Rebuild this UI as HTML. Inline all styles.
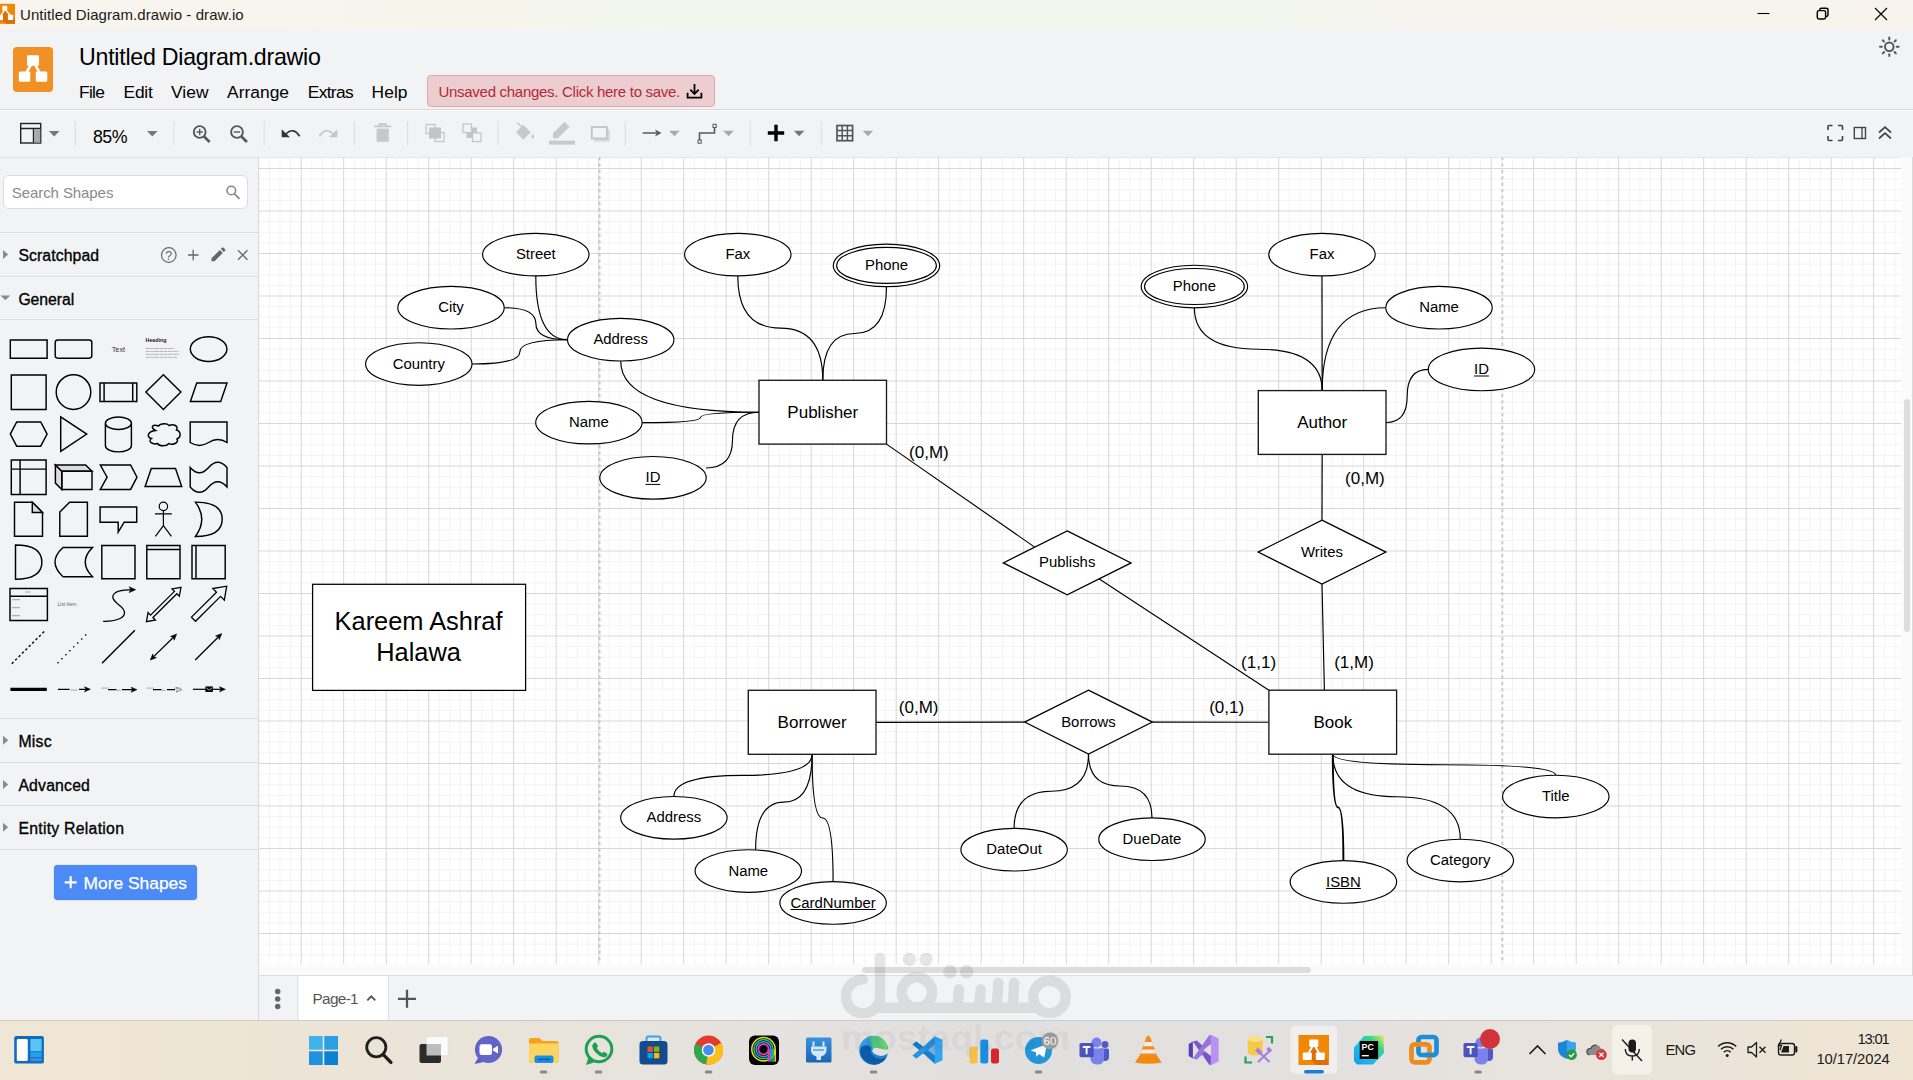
<!DOCTYPE html><html><head><meta charset="utf-8"><title>Untitled Diagram.drawio - draw.io</title>
<style>
html,body{margin:0;padding:0;}
body{width:1913px;height:1080px;overflow:hidden;position:relative;background:#f1f3f4;font-family:"Liberation Sans",sans-serif;}
div{box-sizing:border-box;}
.abs{position:absolute;}
svg{position:absolute;overflow:visible;}
svg text{font-family:"Liberation Sans",sans-serif;fill:#000;}
</style></head><body>
<div class="abs" style="left:0;top:0;width:1913px;height:29px;background:linear-gradient(90deg,#f8f5ee 0%,#f6f5ec 25%,#f1f7ed 38%,#f1f7ed 60%,#f5f4ee 75%,#f7f3ec 100%);"></div>
<svg style="left:0px;top:0px;overflow:hidden;" width="20" height="29" viewBox="0 0 20 29"><rect x="-5" y="3.8" width="20" height="20" fill="#f08705"/><path d="M5,9 L15,19 V23.8 H6 L1.500,19 Z" fill="#df6c0c"/><path d="M4.800,9 L1.300,15.500 M4.800,9 L10.300,15.500" stroke="#fff" stroke-width="1.500"/><rect x="2.300" y="5.700" width="5" height="4.900" rx="0.700" fill="#fff"/><rect x="-2" y="14.700" width="5" height="5.300" rx="0.700" fill="#fff"/><rect x="7.900" y="14.700" width="5.300" height="5.300" rx="0.700" fill="#fff"/></svg>
<svg style="left:1750px;top:0px;" width="163" height="29" viewBox="0 0 163 29"><path d="M7.5,13.5 H19.5" stroke="#000" stroke-width="1.1" fill="none"/><rect x="67.3" y="10.6" width="8.3" height="8.3" rx="1.6" stroke="#000" stroke-width="1.45" fill="none"/><path d="M69.8,10.5 V9.8 Q69.8,8.3 71.3,8.3 H76 Q78,8.3 78,10 V14.7 Q78,16.4 76.3,16.4 H75.8" stroke="#000" stroke-width="1.45" fill="none"/><path d="M125,8 L137,20 M137,8 L125,20" stroke="#000" stroke-width="1.15" fill="none"/></svg>
<div style="position:absolute;top:4.60px;height:20px;line-height:20px;font-size:15.00px;color:#1a1a1a;white-space:pre;letter-spacing:0.087px;left:20.00px;">Untitled Diagram.drawio - draw.io</div>
<div class="abs" style="left:0;top:29px;width:1913px;height:80px;background:#f1f3f4;"></div>
<div class="abs" style="left:0;top:109px;width:1913px;height:1px;background:#d5d7da;"></div>
<div class="abs" style="left:0;top:110px;width:1913px;height:1px;background:#fbfbfc;"></div>
<svg style="left:13px;top:47px;" width="40" height="45" viewBox="0 0 40 45"><rect x="0" y="0" width="40" height="45" rx="4" fill="#f09025"/><path d="M20,14 L11.5,29 M20,14 L28.5,29" stroke="#fff" stroke-width="2.6" fill="none"/><rect x="14" y="8.3" width="12" height="10.5" rx="1.3" fill="#fff"/><rect x="5.8" y="24.5" width="11.5" height="10.2" rx="1.3" fill="#fff"/><rect x="22.8" y="24.5" width="11.5" height="10.2" rx="1.3" fill="#fff"/></svg>
<div style="position:absolute;top:41.80px;height:30px;line-height:30px;font-size:23.20px;color:#000;white-space:pre;letter-spacing:-0.251px;left:79.00px;">Untitled Diagram.drawio</div>
<div style="position:absolute;top:80.60px;height:23px;line-height:23px;font-size:17.40px;color:#000;white-space:pre;letter-spacing:-0.710px;left:79.00px;">File</div>
<div style="position:absolute;top:80.60px;height:23px;line-height:23px;font-size:17.40px;color:#000;white-space:pre;letter-spacing:-0.221px;left:123.50px;">Edit</div>
<div style="position:absolute;top:80.60px;height:23px;line-height:23px;font-size:17.40px;color:#000;white-space:pre;letter-spacing:0.050px;left:171.00px;">View</div>
<div style="position:absolute;top:80.60px;height:23px;line-height:23px;font-size:17.40px;color:#000;white-space:pre;letter-spacing:0.028px;left:227.00px;">Arrange</div>
<div style="position:absolute;top:80.60px;height:23px;line-height:23px;font-size:17.40px;color:#000;white-space:pre;letter-spacing:-0.652px;left:307.70px;">Extras</div>
<div style="position:absolute;top:80.60px;height:23px;line-height:23px;font-size:17.40px;color:#000;white-space:pre;letter-spacing:0.053px;left:371.60px;">Help</div>
<div class="abs" style="left:427px;top:75px;width:288px;height:31.5px;background:#eccdd0;border:1px solid #e2a7ae;border-radius:4px;"></div>
<div style="position:absolute;top:81.90px;height:20px;line-height:20px;font-size:15.00px;color:#b3283a;white-space:pre;letter-spacing:-0.286px;left:438.50px;">Unsaved changes. Click here to save.</div>
<svg style="left:685.5px;top:83px;" width="17" height="17" viewBox="0 0 17 17"><path d="M8.5,1 V10.5 M4.3,6.7 L8.5,10.9 L12.7,6.7" stroke="#000" stroke-width="1.8" fill="none"/><path d="M1.6,9.8 V14.7 H15.4 V9.8" stroke="#000" stroke-width="1.8" fill="none"/></svg>
<div style="position:absolute;top:125.70px;height:23px;line-height:23px;font-size:17.80px;color:#000;white-space:pre;letter-spacing:-0.542px;left:93.00px;">85%</div>
<svg style="left:0px;top:0px;" width="1913" height="160" viewBox="0 0 1913 160"><path d="M75.3,121.5 V145.5" stroke="#dadcdf" stroke-width="1"/><path d="M173.9,121.5 V145.5" stroke="#dadcdf" stroke-width="1"/><path d="M264.2,121.5 V145.5" stroke="#dadcdf" stroke-width="1"/><path d="M354.3,121.5 V145.5" stroke="#dadcdf" stroke-width="1"/><path d="M407.6,121.5 V145.5" stroke="#dadcdf" stroke-width="1"/><path d="M498.0,121.5 V145.5" stroke="#dadcdf" stroke-width="1"/><path d="M625.3,121.5 V145.5" stroke="#dadcdf" stroke-width="1"/><path d="M750.2,121.5 V145.5" stroke="#dadcdf" stroke-width="1"/><path d="M821.3,121.5 V145.5" stroke="#dadcdf" stroke-width="1"/><rect x="20.7" y="123.5" width="20" height="19.5" fill="none" stroke="#222" stroke-width="1.4"/><path d="M20.7,128.5 H40.7 M33.5,128.5 V143" stroke="#222" stroke-width="1.4" fill="none"/><rect x="34" y="129" width="6.3" height="13.5" fill="#aaa"/><path d="M48.9,130.9 h10.6 l-5.3,5.6 z" fill="#777"/><path d="M147.0,130.9 h10.6 l-5.3,5.6 z" fill="#777"/><circle cx="199.7" cy="132" r="5.900" fill="none" stroke="#555" stroke-width="1.900"/><path d="M204.0,136.400 l5.600,5.600" stroke="#555" stroke-width="2.700" fill="none"/><path d="M196.5,132 h6.400" stroke="#555" stroke-width="1.400"/><path d="M199.7,128.800 v6.400" stroke="#555" stroke-width="1.400"/><circle cx="237.0" cy="132" r="5.900" fill="none" stroke="#555" stroke-width="1.900"/><path d="M241.3,136.400 l5.600,5.600" stroke="#555" stroke-width="2.700" fill="none"/><path d="M233.8,132 h6.400" stroke="#555" stroke-width="1.400"/><path d="M281.700,129.300 V137.300 H289.900 Z" fill="#333"/><path d="M285.800,134 Q293.500,126.500 299.600,136.300" stroke="#333" stroke-width="1.700" fill="none"/><path d="M337.300,129.300 V137.300 H329.100 Z" fill="#c6c6c6"/><path d="M333.200,134 Q325.500,126.500 319.400,136.300" stroke="#c6c6c6" stroke-width="1.700" fill="none"/><path d="M374,126.300 h17.200 M379.300,125.600 v-1.500 h6.600 v1.500" stroke="#c8c8c8" stroke-width="1.800" fill="none"/><path d="M376.600,128.600 h12.200 v13.200 h-12.200 z" fill="#c8c8c8"/><rect x="426" y="124.5" width="9" height="9" fill="none" stroke="#c4c4c4" stroke-width="1.2"/><rect x="435" y="132.5" width="9" height="9" fill="none" stroke="#c4c4c4" stroke-width="1.2"/><rect x="429" y="127.5" width="12" height="11" fill="#c4c4c4"/><rect x="466.5" y="127.5" width="10.5" height="10.5" fill="#c4c4c4"/><rect x="463" y="124" width="8.5" height="8.5" fill="#f1f3f4" stroke="#c4c4c4" stroke-width="1.2"/><rect x="472.5" y="133" width="8.5" height="8.5" fill="#f1f3f4" stroke="#c4c4c4" stroke-width="1.2"/><path d="M516,132.200 L523.200,124.700 L530.700,132.300 L523.400,139.700 Z" fill="#c9c9c9"/><path d="M517.300,122.500 l6,6" stroke="#c9c9c9" stroke-width="1.400"/><path d="M532.800,133.800 q2.600,3.300 0,5 q-2.600,-1.700 0,-5z" fill="#c9c9c9"/><path d="M549,142.600 h26" stroke="#c9c9c9" stroke-width="4"/><path d="M553,138.300 v-5 l11.500,-11.500 l5,5 l-11.500,11.500 z" fill="#c9c9c9"/><rect x="594.300" y="129.500" width="15.500" height="12" fill="#d8d8d8"/><rect x="591.800" y="127" width="15" height="11.500" fill="#f1f3f4" stroke="#c4c4c4" stroke-width="1.800"/><path d="M642.700,133 h14" stroke="#5a5a5a" stroke-width="1.500" fill="none"/><path d="M661.500,133 l-6.500,-3.400 l1.600,3.400 l-1.600,3.400 z" fill="#5a5a5a"/><path d="M669.1,130.7 h10.6 l-5.3,5.6 z" fill="#aaa"/><path d="M699.500,140 V133 H714.500 V126.500" stroke="#5a5a5a" stroke-width="1.600" fill="none"/><rect x="698" y="140" width="3.200" height="3.200" fill="#f1f3f4" stroke="#5a5a5a" stroke-width="1"/><rect x="713" y="124.300" width="3.200" height="3.200" fill="#f1f3f4" stroke="#5a5a5a" stroke-width="1"/><path d="M723.2,130.7 h10.6 l-5.3,5.6 z" fill="#aaa"/><path d="M767.8,133 h16.4 M776,124.8 v16.4" stroke="#000" stroke-width="3.4" fill="none"/><path d="M793.8,130.7 h10.6 l-5.3,5.6 z" fill="#777"/><rect x="837" y="125.5" width="15.6" height="15.2" fill="none" stroke="#555" stroke-width="1.7"/><path d="M842.2,125.5 v15.2 M847.4,125.5 v15.2 M837,130.6 h15.6 M837,135.7 h15.6" stroke="#555" stroke-width="1.5" fill="none"/><path d="M862.6,130.7 h10.6 l-5.3,5.6 z" fill="#aaa"/><path d="M1828,130 v-3.5 q0,-1 1,-1 h3.5 M1838,125.5 h3.5 q1,0 1,1 v3.5 M1842.5,136 v3.5 q0,1 -1,1 h-3.5 M1832.500,140.5 h-3.5 q-1,0 -1,-1 v-3.500" stroke="#444" stroke-width="1.6" fill="none"/><rect x="1854.300" y="127.500" width="11.2" height="11" fill="none" stroke="#444" stroke-width="1.4"/><path d="M1862,127.500 v11" stroke="#444" stroke-width="1.300"/><path d="M1879,132.500 l6,-5.300 l6,5.300 M1879,138.500 l6,-5.300 l6,5.300" stroke="#444" stroke-width="1.700" fill="none"/><circle cx="1889.3" cy="46.800" r="4.300" fill="none" stroke="#555" stroke-width="1.950"/><path d="M1896.70,46.80 L1898.60,46.80" stroke="#555" stroke-width="1.950" stroke-linecap="round"/><path d="M1894.53,52.03 L1895.88,53.38" stroke="#555" stroke-width="1.950" stroke-linecap="round"/><path d="M1889.30,54.20 L1889.30,56.10" stroke="#555" stroke-width="1.950" stroke-linecap="round"/><path d="M1884.07,52.03 L1882.72,53.38" stroke="#555" stroke-width="1.950" stroke-linecap="round"/><path d="M1881.90,46.80 L1880.00,46.80" stroke="#555" stroke-width="1.950" stroke-linecap="round"/><path d="M1884.07,41.57 L1882.72,40.22" stroke="#555" stroke-width="1.950" stroke-linecap="round"/><path d="M1889.30,39.40 L1889.30,37.50" stroke="#555" stroke-width="1.950" stroke-linecap="round"/><path d="M1894.53,41.57 L1895.88,40.22" stroke="#555" stroke-width="1.950" stroke-linecap="round"/></svg>
<div class="abs" style="left:0;top:157px;width:258px;height:863px;background:#f1f3f4;"></div>
<div class="abs" style="left:258px;top:157px;width:1px;height:863px;background:#d9dbde;"></div>
<div class="abs" style="left:2.8px;top:174.8px;width:245px;height:33.8px;background:#fff;border:1px solid #dadce0;border-radius:6px;"></div>
<div style="position:absolute;top:182.50px;height:20px;line-height:20px;font-size:15.00px;color:#8a8a8a;white-space:pre;letter-spacing:-0.082px;left:11.80px;">Search Shapes</div>
<div class="abs" style="left:0;top:232.0px;width:258px;height:1px;background:#dcdee1;"></div>
<div class="abs" style="left:0;top:275.8px;width:258px;height:1px;background:#dcdee1;"></div>
<div class="abs" style="left:0;top:318.7px;width:258px;height:1px;background:#dcdee1;"></div>
<div class="abs" style="left:0;top:717.7px;width:258px;height:1px;background:#dcdee1;"></div>
<div class="abs" style="left:0;top:762.0px;width:258px;height:1px;background:#dcdee1;"></div>
<div class="abs" style="left:0;top:805.1px;width:258px;height:1px;background:#dcdee1;"></div>
<div class="abs" style="left:0;top:848.7px;width:258px;height:1px;background:#dcdee1;"></div>
<div style="position:absolute;top:244.70px;height:21px;line-height:21px;font-size:15.80px;color:#000;white-space:pre;letter-spacing:0.087px;left:18.40px;-webkit-text-stroke:0.32px #000;">Scratchpad</div>
<div style="position:absolute;top:288.80px;height:21px;line-height:21px;font-size:15.80px;color:#000;white-space:pre;letter-spacing:-0.073px;left:18.40px;-webkit-text-stroke:0.32px #000;">General</div>
<div style="position:absolute;top:730.50px;height:21px;line-height:21px;font-size:15.80px;color:#000;white-space:pre;letter-spacing:0.257px;left:18.40px;-webkit-text-stroke:0.32px #000;">Misc</div>
<div style="position:absolute;top:774.70px;height:21px;line-height:21px;font-size:15.80px;color:#000;white-space:pre;letter-spacing:0.178px;left:18.40px;-webkit-text-stroke:0.32px #000;">Advanced</div>
<div style="position:absolute;top:817.70px;height:21px;line-height:21px;font-size:15.80px;color:#000;white-space:pre;letter-spacing:0.262px;left:18.40px;-webkit-text-stroke:0.32px #000;">Entity Relation</div>
<div class="abs" style="left:54px;top:865px;width:143px;height:34.5px;background:#4c8bf5;border-radius:4px;box-shadow:0 0 1px #3b78de;"></div>
<div style="position:absolute;top:871.50px;height:23px;line-height:23px;font-size:17.40px;color:#fff;white-space:pre;letter-spacing:-0.009px;left:83.60px;-webkit-text-stroke:0.25px #fff;">More Shapes</div>
<svg style="left:60px;top:872px" width="22" height="22" viewBox="0 0 22 22"><path d="M4.7,10.3 h12 M10.7,4.3 v12" stroke="#fff" stroke-width="2.2"/></svg>
<svg style="left:0px;top:0px;" width="270" height="900" viewBox="0 0 270 900"><circle cx="231.3" cy="190.500" r="4.300" fill="none" stroke="#888" stroke-width="1.600"/><path d="M234.500,193.800 l5,5" stroke="#888" stroke-width="1.800"/><path d="M3,250.0 l5.200,4.500 l-5.200,4.500 z" fill="#8a8a8a"/><path d="M3,735.8 l5.200,4.500 l-5.200,4.500 z" fill="#8a8a8a"/><path d="M3,780.0 l5.200,4.500 l-5.200,4.500 z" fill="#8a8a8a"/><path d="M3,822.8 l5.200,4.500 l-5.200,4.500 z" fill="#8a8a8a"/><path d="M0.500,295.500 h9.800 l-4.900,4.800 z" fill="#8a8a8a"/><circle cx="168.800" cy="255" r="7.300" fill="none" stroke="#666" stroke-width="1.200"/><text x="168.800" y="259.500" font-size="12.500" text-anchor="middle" style="fill:#666">?</text><path d="M188,255 h10.500 M193.200,249.800 v10.500" stroke="#666" stroke-width="1.300"/><path d="M211.500,261.300 v-3 l8.300,-8.300 l3,3 l-8.300,8.300 z M220.800,249 l1.300,-1.300 q0.700,-0.700 1.400,0 l1.600,1.600 q0.700,0.700 0,1.400 l-1.300,1.300 z" fill="#666"/><path d="M238,250.300 l9.500,9.500 M247.500,250.300 l-9.500,9.500" stroke="#666" stroke-width="1.300"/></svg>
<svg style="left:0;top:0" width="270" height="720" viewBox="0 0 270 720"><path d="M10.3,340.0 h36.8 v18.2 h-36.8 z" fill="none" stroke="#000" stroke-width="1.45" stroke-linejoin="miter" /><rect x="55.2" y="340.0" width="36.600" height="18.200" rx="2.600" fill="none" stroke="#000" stroke-width="1.45"/><text x="118.4" y="351.7" font-size="7.3" text-anchor="middle" style="fill:#333">Text</text><text x="145.600" y="342" font-size="5.300" style="font-weight:bold;fill:#222">Heading</text><path d="M145.800,348.5 H174.5" stroke="#999" stroke-width="0.700" stroke-dasharray="4 0.600 3 0.500 5 0.600"/><path d="M145.800,351.4 H179.0" stroke="#999" stroke-width="0.700" stroke-dasharray="4 0.600 3 0.500 5 0.600"/><path d="M145.800,354.3 H179.5" stroke="#999" stroke-width="0.700" stroke-dasharray="4 0.600 3 0.500 5 0.600"/><path d="M145.800,357.3 H177.0" stroke="#999" stroke-width="0.700" stroke-dasharray="4 0.600 3 0.500 5 0.600"/><ellipse cx="208.6" cy="349.1" rx="18.300" ry="12.300" fill="none" stroke="#000" stroke-width="1.45"/><path d="M11.3,374.9 h34.8 v34.6 h-34.8 z" fill="none" stroke="#000" stroke-width="1.45" stroke-linejoin="miter" /><circle cx="73.5" cy="392.1" r="17.300" fill="none" stroke="#000" stroke-width="1.45"/><path d="M100.0,383.0 h36.8 v18.4 h-36.8 z M104.1,383.0 v18.4 M132.7,383.0 v18.4" fill="none" stroke="#000" stroke-width="1.45" stroke-linejoin="miter" /><path d="M163.4,374.7 l17.500,17.400 l-17.500,17.400 l-17.500,-17.400 z" fill="none" stroke="#000" stroke-width="1.45" stroke-linejoin="miter" /><path d="M196.7,383.0 h30.3 l-6.3,18.4 h-30.3 z" fill="none" stroke="#000" stroke-width="1.45" stroke-linejoin="miter" /><path d="M16.7,422.0 h24 l6.4,12.1 l-6.4,12.1 h-24 l-6.4,-12.1 z" fill="none" stroke="#000" stroke-width="1.45" stroke-linejoin="miter" /><path d="M60.7,416.8 L86.7,434.1 L60.7,451.4 Z" fill="none" stroke="#000" stroke-width="1.45" stroke-linejoin="miter" /><path d="M105.4,423.2 v22.5 a13,6.2 0 0 0 26,0 v-22.500 a13,6.200 0 0 0 -26,0 a13,6.200 0 0 0 26,0" fill="none" stroke="#000" stroke-width="1.45" stroke-linejoin="miter" /><path d="M155.500,430.500 C150,427.500 152,424 158.500,426 C160.500,423 167.500,423 169,425.500 C173.500,423.500 179,426 176.500,430 C181.500,431.500 181,437.500 177,439 C179.500,443 172,445.500 169,443.500 C166.500,446.500 159.500,446.500 157.500,443.500 C152.500,445 147.500,441.500 151.500,438.500 C146.500,437.500 147,431.500 155.500,430.500 Z" fill="none" stroke="#000" stroke-width="1.45" stroke-linejoin="miter" /><path d="M190.2,422.0 h36.8 v20.500 q-9.2,-5.8 -18.4,0 t-18.4,0 z" fill="none" stroke="#000" stroke-width="1.45" stroke-linejoin="miter" /><path d="M11.3,459.9 h34.8 v34.6 h-34.8 z M20.1,459.9 v34.6 M11.3,469.1 h34.8" fill="none" stroke="#000" stroke-width="1.45" stroke-linejoin="miter" /><path d="M55.4,465.0 l6.4,6.3 v18.1 l-6.4,-6.300 z" fill="#dcdcdc" stroke="#000" stroke-width="1.45" stroke-linejoin="miter" /><path d="M55.4,465.0 h30.2 l6.4,6.3 h-30.2 z" fill="#dcdcdc" stroke="#000" stroke-width="1.45" stroke-linejoin="miter" /><path d="M61.8,471.3 h30.2 v18.1 h-30.2 z" fill="none" stroke="#000" stroke-width="1.45" stroke-linejoin="miter" /><path d="M100.3,465.0 h30.3 l6.4,12.2 l-6.4,12.2 h-30.300 l6.800,-12.200 z" fill="none" stroke="#000" stroke-width="1.45" stroke-linejoin="miter" /><path d="M151.3,468.4 h24.2 l6.2,18.1 h-36.600 z" fill="none" stroke="#000" stroke-width="1.45" stroke-linejoin="miter" /><path d="M190.2,467.4 q9.2,10.500 18.4,0 t18.4,0 v19.500 q-9.200,-10.500 -18.400,0 t-18.400,0 z" fill="none" stroke="#000" stroke-width="1.45" stroke-linejoin="miter" /><path d="M14.5,502.3 h17.8 l10.2,10.2 v23.800 h-28 z" fill="none" stroke="#000" stroke-width="1.45" stroke-linejoin="miter" /><path d="M32.3,502.3 v10.2 h10.2 z" fill="#dcdcdc" stroke="#000" stroke-width="1.45" stroke-linejoin="miter" /><path d="M69.6,502.3 h17.8 v34 h-27.600 v-24.200 z" fill="none" stroke="#000" stroke-width="1.45" stroke-linejoin="miter" /><path d="M100.1,507.0 h36.6 v15.2 h-12.5 l-6,10 v-10 h-18.100 z" fill="none" stroke="#000" stroke-width="1.45" stroke-linejoin="miter" /><circle cx="163.4" cy="506.4" r="4.200" fill="none" stroke="#000" stroke-width="1.200"/><path d="M163.4,510.5 v15.2 M155.0,513.8 h16.8 M163.4,525.6 l-8,10.700 M163.4,525.6 l8,10.700" fill="none" stroke="#000" stroke-width="1.20" stroke-linejoin="miter" /><path d="M195.4,502.1 Q222.2,502.1 222.2,519.3 Q222.2,536.5 195.4,536.5 Q208.1,519.3 195.4,502.1 Z" fill="none" stroke="#000" stroke-width="1.45" stroke-linejoin="miter" /><path d="M15.5,544.9 Q41.9,544.9 41.9,562.1 Q41.9,579.3 15.5,579.3 Z" fill="none" stroke="#000" stroke-width="1.45" stroke-linejoin="miter" /><path d="M63.0,547.5 H92.5 Q78.0,562.1 92.5,576.7 H63.0 Q47.0,562.1 63.0,547.5 Z" fill="none" stroke="#000" stroke-width="1.45" stroke-linejoin="miter" /><path d="M101.8,545.5 h33.2 v33.2 h-33.2 z" fill="none" stroke="#000" stroke-width="1.45" stroke-linejoin="miter" /><path d="M146.8,545.5 h33.2 v33.2 h-33.2 z M146.8,549.4 h33.2" fill="none" stroke="#000" stroke-width="1.45" stroke-linejoin="miter" /><path d="M192.0,545.5 h33.2 v33.2 h-33.2 z M196.0,545.5 v33.2" fill="none" stroke="#000" stroke-width="1.45" stroke-linejoin="miter" /><path d="M10.0,588.4 h37.4 v32 h-37.4 z M10.0,596.2 h37.4" fill="none" stroke="#000" stroke-width="1.45" stroke-linejoin="miter" /><path d="M12,599.7 h8" stroke="#888" stroke-width="0.800"/><path d="M12,607.7 h8" stroke="#888" stroke-width="0.800"/><path d="M12,615.7 h8" stroke="#888" stroke-width="0.800"/><path d="M25,592 h5.500" stroke="#999" stroke-width="0.800"/><text x="57.500" y="606" font-size="5" style="fill:#666">List Item</text><path d="M103.100,621.300 C118,621.500 128,617 123.500,609.500 C120.500,604.500 112,601.500 112.800,596.500 C113.800,590.500 125,589.700 133,589.700" fill="none" stroke="#000" stroke-width="1.30" stroke-linejoin="miter" /><path d="M135.60,589.70 L129.10,586.80 L130.92,589.70 L129.10,592.60 Z" fill="#000" stroke="#000" stroke-width="0.6"/><path d="M146.40,621.60 L148.07,612.63 L150.53,615.11 L174.48,591.37 L172.01,588.89 L181.00,587.30 L179.33,596.27 L176.87,593.79 L152.92,617.53 L155.39,620.01 Z" fill="none" stroke="#000" stroke-width="1.30" stroke-linejoin="miter" /><path d="M191.46,617.14 L216.50,592.25 L212.76,588.49 L226.70,586.20 L224.32,600.12 L220.59,596.36 L195.54,621.26 Z" fill="none" stroke="#000" stroke-width="1.30" stroke-linejoin="miter" /><path d="M11.800,663.700 L44.600,631.100" stroke="#000" stroke-width="1.400" stroke-dasharray="2.400 2.400" fill="none"/><path d="M57.500,663.200 L87.700,633" stroke="#000" stroke-width="1.400" stroke-dasharray="1.400 4.200" fill="none"/><path d="M102,663.200 L134.900,630.300" fill="none" stroke="#000" stroke-width="1.45" stroke-linejoin="miter" /><path d="M152.4,657.9 L174.5,636.2" fill="none" stroke="#000" stroke-width="1.30" stroke-linejoin="miter" /><path d="M176.60,634.10 L170.50,636.46 L173.52,637.13 L174.15,640.16 Z" fill="#000" stroke="#000" stroke-width="0.6"/><path d="M150.30,660.00 L156.40,657.64 L153.38,656.97 L152.75,653.94 Z" fill="#000" stroke="#000" stroke-width="0.6"/><path d="M195.200,660 L219.6,635.7" fill="none" stroke="#000" stroke-width="1.30" stroke-linejoin="miter" /><path d="M221.70,633.60 L215.61,635.99 L218.64,636.65 L219.28,639.68 Z" fill="#000" stroke="#000" stroke-width="0.6"/><path d="M10.400,689.3 H46.800" stroke="#000" stroke-width="3.200"/><path d="M57.900,689.3 H69.500 M79,689.3 H86" fill="none" stroke="#000" stroke-width="1.20" stroke-linejoin="miter" /><path d="M90.30,689.30 L84.50,686.80 L86.12,689.30 L84.50,691.80 Z" fill="#000" stroke="#000" stroke-width="0.6"/><path d="M70.500,690.1 h7" stroke="#999" stroke-width="0.800"/><path d="M108,689.7 H116.500 M122,689.7 H133" fill="none" stroke="#000" stroke-width="1.30" stroke-linejoin="miter" /><path d="M136.90,689.70 L131.10,687.20 L132.72,689.70 L131.10,692.20 Z" fill="#000" stroke="#000" stroke-width="0.6"/><path d="M101.200,688.1 h7.500 M117,690.3 h4" stroke="#999" stroke-width="0.800"/><path d="M153,689.7 H161.500 M167,689.7 H175" fill="none" stroke="#000" stroke-width="1.30" stroke-linejoin="miter" /><path d="M146.400,688.1 h7.500 M162,690.3 h4 M174,688.1 h6.500" stroke="#999" stroke-width="0.800"/><path d="M181.800,689.7 l-5.600,-2.400 l1.500,2.400 l-1.500,2.400 z" fill="#fff" stroke="#666" stroke-width="0.700"/><path d="M192.900,689.3 H221" fill="none" stroke="#000" stroke-width="1.20" stroke-linejoin="miter" /><path d="M225.30,689.30 L219.50,686.80 L221.12,689.30 L219.50,691.80 Z" fill="#000" stroke="#000" stroke-width="0.6"/><rect x="205.400" y="686.4" width="7.400" height="5.600" fill="#000"/><path d="M206.300,687.9 l2.800,2.300 l2.800,-2.300" stroke="#fff" stroke-width="0.700" fill="none"/></svg>
<div class="abs" style="left:259px;top:157px;width:1654px;height:818px;background:#fff;"></div>
<div class="abs" style="left:0;top:156.5px;width:1913px;height:1px;background:#dfe1e4;"></div>
<svg width="1913" height="1080" viewBox="0 0 1913 1080" style="left:0;top:0;">
<defs><clipPath id="cv"><rect x="259" y="157.5" width="1642" height="806.5"/></clipPath></defs><g clip-path="url(#cv)">
<path d="M269.32,157 V964 M279.95,157 V964 M290.57,157 V964 M311.82,157 V964 M322.45,157 V964 M333.07,157 V964 M354.32,157 V964 M364.95,157 V964 M375.57,157 V964 M396.82,157 V964 M407.45,157 V964 M418.07,157 V964 M439.32,157 V964 M449.95,157 V964 M460.57,157 V964 M481.82,157 V964 M492.45,157 V964 M503.07,157 V964 M524.33,157 V964 M534.95,157 V964 M545.58,157 V964 M566.83,157 V964 M577.45,157 V964 M588.08,157 V964 M609.33,157 V964 M619.95,157 V964 M630.58,157 V964 M651.83,157 V964 M662.45,157 V964 M673.08,157 V964 M694.33,157 V964 M704.95,157 V964 M715.58,157 V964 M736.83,157 V964 M747.45,157 V964 M758.08,157 V964 M779.33,157 V964 M789.95,157 V964 M800.58,157 V964 M821.83,157 V964 M832.45,157 V964 M843.08,157 V964 M864.33,157 V964 M874.95,157 V964 M885.58,157 V964 M906.83,157 V964 M917.45,157 V964 M928.08,157 V964 M949.33,157 V964 M959.95,157 V964 M970.58,157 V964 M991.83,157 V964 M1002.45,157 V964 M1013.08,157 V964 M1034.33,157 V964 M1044.95,157 V964 M1055.58,157 V964 M1076.83,157 V964 M1087.45,157 V964 M1098.08,157 V964 M1119.33,157 V964 M1129.95,157 V964 M1140.58,157 V964 M1161.83,157 V964 M1172.45,157 V964 M1183.08,157 V964 M1204.33,157 V964 M1214.95,157 V964 M1225.58,157 V964 M1246.83,157 V964 M1257.45,157 V964 M1268.08,157 V964 M1289.33,157 V964 M1299.95,157 V964 M1310.58,157 V964 M1331.83,157 V964 M1342.45,157 V964 M1353.08,157 V964 M1374.33,157 V964 M1384.95,157 V964 M1395.58,157 V964 M1416.83,157 V964 M1427.45,157 V964 M1438.08,157 V964 M1459.33,157 V964 M1469.95,157 V964 M1480.58,157 V964 M1501.83,157 V964 M1512.45,157 V964 M1523.08,157 V964 M1544.33,157 V964 M1554.95,157 V964 M1565.58,157 V964 M1586.83,157 V964 M1597.45,157 V964 M1608.08,157 V964 M1629.33,157 V964 M1639.95,157 V964 M1650.58,157 V964 M1671.83,157 V964 M1682.45,157 V964 M1693.08,157 V964 M1714.33,157 V964 M1724.95,157 V964 M1735.58,157 V964 M1756.83,157 V964 M1767.45,157 V964 M1778.08,157 V964 M1799.33,157 V964 M1809.95,157 V964 M1820.58,157 V964 M1841.83,157 V964 M1852.45,157 V964 M1863.08,157 V964 M1884.33,157 V964 M1894.95,157 V964 M259,136.62 H1901 M259,147.25 H1901 M259,157.88 H1901 M259,179.12 H1901 M259,189.75 H1901 M259,200.38 H1901 M259,221.62 H1901 M259,232.25 H1901 M259,242.88 H1901 M259,264.12 H1901 M259,274.75 H1901 M259,285.38 H1901 M259,306.62 H1901 M259,317.25 H1901 M259,327.88 H1901 M259,349.12 H1901 M259,359.75 H1901 M259,370.38 H1901 M259,391.62 H1901 M259,402.25 H1901 M259,412.88 H1901 M259,434.12 H1901 M259,444.75 H1901 M259,455.38 H1901 M259,476.62 H1901 M259,487.25 H1901 M259,497.88 H1901 M259,519.12 H1901 M259,529.75 H1901 M259,540.38 H1901 M259,561.62 H1901 M259,572.25 H1901 M259,582.88 H1901 M259,604.12 H1901 M259,614.75 H1901 M259,625.38 H1901 M259,646.62 H1901 M259,657.25 H1901 M259,667.88 H1901 M259,689.12 H1901 M259,699.75 H1901 M259,710.38 H1901 M259,731.62 H1901 M259,742.25 H1901 M259,752.88 H1901 M259,774.12 H1901 M259,784.75 H1901 M259,795.38 H1901 M259,816.62 H1901 M259,827.25 H1901 M259,837.88 H1901 M259,859.12 H1901 M259,869.75 H1901 M259,880.38 H1901 M259,901.62 H1901 M259,912.25 H1901 M259,922.88 H1901 M259,944.12 H1901 M259,954.75 H1901" stroke="#f3f3f4" stroke-width="1" fill="none"/>
<path d="M258.70,157 V964 M301.20,157 V964 M343.70,157 V964 M386.20,157 V964 M428.70,157 V964 M471.20,157 V964 M513.70,157 V964 M556.20,157 V964 M598.70,157 V964 M641.20,157 V964 M683.70,157 V964 M726.20,157 V964 M768.70,157 V964 M811.20,157 V964 M853.70,157 V964 M896.20,157 V964 M938.70,157 V964 M981.20,157 V964 M1023.70,157 V964 M1066.20,157 V964 M1108.70,157 V964 M1151.20,157 V964 M1193.70,157 V964 M1236.20,157 V964 M1278.70,157 V964 M1321.20,157 V964 M1363.70,157 V964 M1406.20,157 V964 M1448.70,157 V964 M1491.20,157 V964 M1533.70,157 V964 M1576.20,157 V964 M1618.70,157 V964 M1661.20,157 V964 M1703.70,157 V964 M1746.20,157 V964 M1788.70,157 V964 M1831.20,157 V964 M1873.70,157 V964 M259,126.00 H1901 M259,168.50 H1901 M259,211.00 H1901 M259,253.50 H1901 M259,296.00 H1901 M259,338.50 H1901 M259,381.00 H1901 M259,423.50 H1901 M259,466.00 H1901 M259,508.50 H1901 M259,551.00 H1901 M259,593.50 H1901 M259,636.00 H1901 M259,678.50 H1901 M259,721.00 H1901 M259,763.50 H1901 M259,806.00 H1901 M259,848.50 H1901 M259,891.00 H1901 M259,933.50 H1901" stroke="#d7d7d9" stroke-width="1" fill="none"/>
<path d="M599.6,157 V964 M1502.4,157 V964" stroke="#c6c6c6" stroke-width="1.8" stroke-dasharray="3.2 3.2" fill="none"/>
<path d="M535.8,275.9 Q535.8,339.7 567.5,339.7" fill="none" stroke="#000" stroke-width="1.15"/>
<path d="M504.2,307.7 Q535.9,307.7 535.9,323.7 Q535.9,339.7 567.5,339.7" fill="none" stroke="#000" stroke-width="1.15"/>
<path d="M472.0,364.0 Q519.8,364.0 519.8,351.9 Q519.8,339.7 567.5,339.7" fill="none" stroke="#000" stroke-width="1.15"/>
<path d="M620.7,361.0 Q620.7,412.2 759.0,412.2" fill="none" stroke="#000" stroke-width="1.15"/>
<path d="M642.1,422.6 Q700.5,422.6 700.5,417.4 Q700.5,412.2 759.0,412.2" fill="none" stroke="#000" stroke-width="1.15"/>
<path d="M706.0,468.0 Q732.5,468.0 732.5,440.1 Q732.5,412.2 759.0,412.2" fill="none" stroke="#000" stroke-width="1.15"/>
<path d="M737.8,275.9 Q737.8,328.1 780.3,328.1 Q822.8,328.1 822.8,380.3" fill="none" stroke="#000" stroke-width="1.15"/>
<path d="M886.5,286.7 Q886.5,333.5 854.6,333.5 Q822.8,333.5 822.8,380.3" fill="none" stroke="#000" stroke-width="1.15"/>
<path d="M1194.4,307.8 Q1194.4,349.2 1258.3,349.2 Q1322.2,349.2 1322.2,390.6" fill="none" stroke="#000" stroke-width="1.15"/>
<path d="M1322.0,275.9 L1322.2,390.6" fill="none" stroke="#000" stroke-width="1.15"/>
<path d="M1385.8,307.7 Q1322.2,307.7 1322.2,390.6" fill="none" stroke="#000" stroke-width="1.15"/>
<path d="M1428.3,369.4 Q1407.2,369.4 1407.2,395.9 Q1407.2,422.5 1386.0,422.5" fill="none" stroke="#000" stroke-width="1.15"/>
<path d="M1322.2,454.4 L1322.0,520.1" fill="none" stroke="#000" stroke-width="1.15"/>
<path d="M1322.0,584.1 L1324.4,690.2" fill="none" stroke="#000" stroke-width="1.15"/>
<path d="M886.5,444.1 L1034.3,546.9" fill="none" stroke="#000" stroke-width="1.15"/>
<path d="M1099.3,579.1 L1268.9,690.2" fill="none" stroke="#000" stroke-width="1.15"/>
<path d="M876.0,722.3 L1024.6,722.1" fill="none" stroke="#000" stroke-width="1.15"/>
<path d="M1152.4,722.1 L1268.9,722.2" fill="none" stroke="#000" stroke-width="1.15"/>
<path d="M812.1,754.3 Q812.1,775.4 743.0,775.4 Q673.9,775.4 673.9,796.5" fill="none" stroke="#000" stroke-width="1.15"/>
<path d="M812.1,754.3 Q812.1,802.1 783.9,802.1 Q755.6,802.1 755.6,850.0" fill="none" stroke="#000" stroke-width="1.15"/>
<path d="M812.1,754.3 Q812.1,818.0 822.6,818.0 Q833.1,818.0 833.1,881.6" fill="none" stroke="#000" stroke-width="1.15"/>
<path d="M1088.5,754.1 Q1088.5,791.2 1051.3,791.2 Q1014.1,791.2 1014.1,828.4" fill="none" stroke="#000" stroke-width="1.15"/>
<path d="M1088.5,754.1 Q1088.5,786.0 1120.2,786.0 Q1152.0,786.0 1152.0,817.9" fill="none" stroke="#000" stroke-width="1.15"/>
<path d="M1332.8,754.2 Q1332.8,807.4 1338.1,807.4 Q1343.4,807.4 1343.4,860.6" fill="none" stroke="#000" stroke-width="1.9"/>
<path d="M1332.8,754.2 Q1332.8,796.7 1396.5,796.7 Q1460.3,796.7 1460.3,839.2" fill="none" stroke="#000" stroke-width="1.15"/>
<path d="M1332.8,754.2 Q1332.8,764.7 1444.3,764.7 Q1555.8,764.7 1555.8,775.2" fill="none" stroke="#000" stroke-width="1.15"/>
<ellipse cx="535.8" cy="254.6" rx="53.2" ry="21.3" fill="#fff" stroke="#000" stroke-width="1.15"/>
<text x="535.8" y="259.2" font-size="14.90" text-anchor="middle">Street</text>
<ellipse cx="451.0" cy="307.7" rx="53.2" ry="21.3" fill="#fff" stroke="#000" stroke-width="1.15"/>
<text x="451.0" y="312.3" font-size="14.90" text-anchor="middle">City</text>
<ellipse cx="418.8" cy="364.0" rx="53.2" ry="21.3" fill="#fff" stroke="#000" stroke-width="1.15"/>
<text x="418.8" y="368.6" font-size="14.90" text-anchor="middle">Country</text>
<ellipse cx="620.7" cy="339.7" rx="53.2" ry="21.3" fill="#fff" stroke="#000" stroke-width="1.15"/>
<text x="620.7" y="344.3" font-size="14.90" text-anchor="middle">Address</text>
<ellipse cx="588.9" cy="422.6" rx="53.2" ry="21.3" fill="#fff" stroke="#000" stroke-width="1.15"/>
<text x="588.9" y="427.2" font-size="14.90" text-anchor="middle">Name</text>
<ellipse cx="653.0" cy="477.8" rx="53.2" ry="21.3" fill="#fff" stroke="#000" stroke-width="1.15"/>
<text x="653.0" y="482.4" font-size="14.90" text-anchor="middle">ID</text>
<path d="M645.5,484.4 h14.9" stroke="#000" stroke-width="1"/>
<ellipse cx="737.8" cy="254.6" rx="53.2" ry="21.3" fill="#fff" stroke="#000" stroke-width="1.15"/>
<text x="737.8" y="259.2" font-size="14.90" text-anchor="middle">Fax</text>
<ellipse cx="886.5" cy="265.4" rx="53.2" ry="21.3" fill="#fff" stroke="#000" stroke-width="1.15"/>
<ellipse cx="886.5" cy="265.4" rx="49.9" ry="18.0" fill="none" stroke="#000" stroke-width="1.15"/>
<text x="886.5" y="270.0" font-size="14.90" text-anchor="middle">Phone</text>
<ellipse cx="1194.4" cy="286.5" rx="53.2" ry="21.3" fill="#fff" stroke="#000" stroke-width="1.15"/>
<ellipse cx="1194.4" cy="286.5" rx="49.9" ry="18.0" fill="none" stroke="#000" stroke-width="1.15"/>
<text x="1194.4" y="291.1" font-size="14.90" text-anchor="middle">Phone</text>
<ellipse cx="1322.0" cy="254.6" rx="53.2" ry="21.3" fill="#fff" stroke="#000" stroke-width="1.15"/>
<text x="1322.0" y="259.2" font-size="14.90" text-anchor="middle">Fax</text>
<ellipse cx="1439.0" cy="307.7" rx="53.2" ry="21.3" fill="#fff" stroke="#000" stroke-width="1.15"/>
<text x="1439.0" y="312.3" font-size="14.90" text-anchor="middle">Name</text>
<ellipse cx="1481.5" cy="369.4" rx="53.2" ry="21.3" fill="#fff" stroke="#000" stroke-width="1.15"/>
<text x="1481.5" y="374.0" font-size="14.90" text-anchor="middle">ID</text>
<path d="M1474.0,376.0 h14.9" stroke="#000" stroke-width="1"/>
<ellipse cx="673.9" cy="817.8" rx="53.2" ry="21.3" fill="#fff" stroke="#000" stroke-width="1.15"/>
<text x="673.9" y="822.4" font-size="14.90" text-anchor="middle">Address</text>
<ellipse cx="748.3" cy="871.0" rx="53.2" ry="21.3" fill="#fff" stroke="#000" stroke-width="1.15"/>
<text x="748.3" y="875.6" font-size="14.90" text-anchor="middle">Name</text>
<ellipse cx="833.1" cy="902.9" rx="53.2" ry="21.3" fill="#fff" stroke="#000" stroke-width="1.15"/>
<text x="833.1" y="907.5" font-size="14.90" text-anchor="middle">CardNumber</text>
<path d="M790.5,909.5 h85.3" stroke="#000" stroke-width="1"/>
<ellipse cx="1014.1" cy="849.7" rx="53.2" ry="21.3" fill="#fff" stroke="#000" stroke-width="1.15"/>
<text x="1014.1" y="854.3" font-size="14.90" text-anchor="middle">DateOut</text>
<ellipse cx="1152.0" cy="839.2" rx="53.2" ry="21.3" fill="#fff" stroke="#000" stroke-width="1.15"/>
<text x="1152.0" y="843.8" font-size="14.90" text-anchor="middle">DueDate</text>
<ellipse cx="1343.4" cy="881.9" rx="53.2" ry="21.3" fill="#fff" stroke="#000" stroke-width="1.15"/>
<text x="1343.4" y="886.5" font-size="14.90" text-anchor="middle">ISBN</text>
<path d="M1326.0,888.5 h34.8" stroke="#000" stroke-width="1"/>
<ellipse cx="1460.3" cy="860.5" rx="53.2" ry="21.3" fill="#fff" stroke="#000" stroke-width="1.15"/>
<text x="1460.3" y="865.1" font-size="14.90" text-anchor="middle">Category</text>
<ellipse cx="1555.8" cy="796.5" rx="53.2" ry="21.3" fill="#fff" stroke="#000" stroke-width="1.15"/>
<text x="1555.8" y="801.1" font-size="14.90" text-anchor="middle">Title</text>
<rect x="759.0" y="380.3" width="127.5" height="63.8" fill="#fff" stroke="#1a1a1a" stroke-width="1.35"/>
<text x="822.8" y="417.6" font-size="17.00" text-anchor="middle">Publisher</text>
<rect x="1258.3" y="390.6" width="127.7" height="63.8" fill="#fff" stroke="#1a1a1a" stroke-width="1.35"/>
<text x="1322.2" y="427.9" font-size="17.00" text-anchor="middle">Author</text>
<rect x="748.3" y="690.3" width="127.7" height="64.0" fill="#fff" stroke="#1a1a1a" stroke-width="1.35"/>
<text x="812.1" y="727.7" font-size="17.00" text-anchor="middle">Borrower</text>
<rect x="1268.9" y="690.2" width="127.7" height="64.0" fill="#fff" stroke="#1a1a1a" stroke-width="1.35"/>
<text x="1332.8" y="727.6" font-size="17.00" text-anchor="middle">Book</text>
<path d="M1067.2,530.9 L1131.1,562.9 L1067.2,594.9 L1003.3,562.9 Z" fill="#fff" stroke="#000" stroke-width="1.25"/>
<text x="1067.2" y="566.6" font-size="14.90" text-anchor="middle">Publishs</text>
<path d="M1322.0,520.1 L1385.9,552.1 L1322.0,584.1 L1258.1,552.1 Z" fill="#fff" stroke="#000" stroke-width="1.25"/>
<text x="1322.0" y="556.5" font-size="14.90" text-anchor="middle">Writes</text>
<path d="M1088.5,690.1 L1152.4,722.1 L1088.5,754.1 L1024.6,722.1 Z" fill="#fff" stroke="#000" stroke-width="1.25"/>
<text x="1088.5" y="726.5" font-size="14.90" text-anchor="middle">Borrows</text>
<text x="928.9" y="458.3" font-size="17.00" text-anchor="middle">(0,M)</text>
<text x="1364.9" y="483.9" font-size="17.00" text-anchor="middle">(0,M)</text>
<text x="1258.6" y="668.0" font-size="17.00" text-anchor="middle">(1,1)</text>
<text x="1354.0" y="668.0" font-size="17.00" text-anchor="middle">(1,M)</text>
<text x="1226.7" y="713.2" font-size="17.00" text-anchor="middle">(0,1)</text>
<text x="918.7" y="713.0" font-size="17.00" text-anchor="middle">(0,M)</text>
<rect x="312.6" y="584.3" width="213" height="106.1" fill="#fff" stroke="#000" stroke-width="1.25"/>
<text x="418.6" y="630.2" font-size="25.4" text-anchor="middle">Kareem Ashraf</text>
<text x="418.6" y="660.9" font-size="25.4" text-anchor="middle">Halawa</text>
</g></svg>
<div class="abs" style="left:259px;top:964px;width:1654px;height:11px;background:#fbfbfb;"></div>
<div class="abs" style="left:1901px;top:157px;width:12px;height:818px;background:#fbfbfb;"></div>
<div class="abs" style="left:862px;top:967px;width:449px;height:5.6px;background:#dddddd;border-radius:3px;"></div>
<div class="abs" style="left:1904.3px;top:398.7px;width:5.6px;height:233.8px;background:#dddddd;border-radius:3px;"></div>
<div class="abs" style="left:259px;top:975px;width:1654px;height:1px;background:#dcdee1;"></div>
<div class="abs" style="left:1912px;top:157px;width:1px;height:819px;background:#d9dadc;"></div>
<div class="abs" style="left:259px;top:976px;width:1654px;height:44px;background:#f1f3f4;"></div>
<div class="abs" style="left:297.6px;top:976px;width:90.8px;height:44px;background:#fff;"></div>
<div style="position:absolute;top:989.20px;height:20px;line-height:20px;font-size:15.30px;color:#555;white-space:pre;letter-spacing:-0.640px;left:312.50px;">Page-1</div>
<svg style="left:0px;top:0px;" width="500" height="1080" viewBox="0 0 500 1080"><circle cx="277.700" cy="991.6" r="2.750" fill="#666"/><circle cx="277.700" cy="999.0" r="2.750" fill="#666"/><circle cx="277.700" cy="1006.4" r="2.750" fill="#666"/><path d="M367.300,1000.300 l4,-4 l4,4" stroke="#555" stroke-width="1.900" fill="none"/><path d="M398,998.800 h18 M407,989.800 v18" stroke="#555" stroke-width="2.300"/><path d="M297.800,976 V1020 M388.300,976 V1020" stroke="#dcdee1" stroke-width="1"/></svg>
<div class="abs" style="left:0;top:1020px;width:1913px;height:60px;background:linear-gradient(90deg,#efe6d6 0%,#ece4d6 18%,#e6e3de 35%,#e2e0df 50%,#e3e1e0 70%,#ebe4d9 88%,#efe5d3 100%);"></div>
<div class="abs" style="left:0;top:1020px;width:1913px;height:1px;background:#cfccc7;"></div>
<svg style="left:0;top:0" width="1913" height="1080" viewBox="0 0 1913 1080"><rect x="14.200" y="1036" width="29.700" height="27.600" rx="2.200" fill="#0f6cbd"/><rect x="16.800" y="1039" width="11" height="22" rx="1.300" fill="#fbfbfb"/><rect x="30.400" y="1039" width="11.200" height="12.300" fill="#5cc4f4"/><rect x="30.400" y="1052.200" width="11.200" height="5" fill="#22a1ee"/><rect x="30.400" y="1058.200" width="11.200" height="3" fill="#3b8fe0"/><rect x="309.0" y="1036.0" width="13.700" height="13.700" fill="#3fb3ea"/><rect x="324.3" y="1036.0" width="13.700" height="13.700" fill="#2a9fe4"/><rect x="309.0" y="1051.3" width="13.700" height="13.700" fill="#1f93de"/><rect x="324.3" y="1051.3" width="13.700" height="13.700" fill="#0c80d2"/><circle cx="376.300" cy="1047.300" r="9.600" fill="none" stroke="#1f1f1f" stroke-width="2.800"/><path d="M383.300,1054.600 l7.600,7.800" stroke="#1f1f1f" stroke-width="3.400" stroke-linecap="round"/><rect x="426.500" y="1036.500" width="21.500" height="19" rx="1.500" fill="#fbfbfb" stroke="#dedede" stroke-width="0.600"/><rect x="419.500" y="1044" width="21.500" height="19" rx="2" fill="#2b2b2b"/><rect x="426.500" y="1044" width="14.500" height="11.500" fill="#bdbdbd"/><circle cx="488.500" cy="1049.500" r="13.600" fill="#6264c9"/><path d="M478,1058 l-3.500,6 l9,-2 z" fill="#5a5cc2"/><rect x="479.500" y="1044.300" width="12.500" height="10.600" rx="2.200" fill="#fff"/><path d="M493,1048.800 l5,-3 v7.800 l-5,-3 z" fill="#fff"/><path d="M529,1040 q0,-2 2,-2 h8.500 l3,3 h14 q2,0 2,2 v18 q0,2 -2,2 h-25.500 q-2,0 -2,-2 z" fill="#f5a11c"/><path d="M529,1043.500 h29.500 v17.500 q0,2 -2,2 h-25.500 q-2,0 -2,-2 z" fill="#fcd462"/><rect x="534.500" y="1055.500" width="19" height="7.500" rx="2" fill="#1a8fe3"/><rect x="538" y="1058.500" width="12" height="1.800" fill="#0f63b0"/><circle cx="599" cy="1049" r="12.800" fill="none" stroke="#1ea052" stroke-width="3"/><path d="M588.500,1057.500 l-2.500,7.500 l8,-2.600 z" fill="#1ea052"/><path d="M593.500,1043.500 q1.500,-2 3,0 l1.300,2.300 q0.500,1 -1,2.200 q1.800,3.600 5.300,5.200 q1.300,-1.700 2.400,-1.100 l2.400,1.400 q1.400,1 -0.300,2.700 q-2.600,2.200 -7.600,-0.800 q-5.600,-3.700 -6.800,-8.800 q-0.300,-1.800 1.300,-3.100 z" fill="#1ea052"/><path d="M646.500,1042 v-3.500 q0,-2 2,-2 h10 q2,0 2,2 v3.500" fill="none" stroke="#35a6ee" stroke-width="2"/><rect x="639.500" y="1041" width="28" height="23.500" rx="3.500" fill="#134b8e"/><rect x="647.500" y="1046.500" width="5.300" height="5.300" fill="#f25022"/><rect x="654" y="1046.500" width="5.300" height="5.300" fill="#7fba00"/><rect x="647.500" y="1053" width="5.300" height="5.300" fill="#00a4ef"/><rect x="654" y="1053" width="5.300" height="5.300" fill="#ffb900"/><circle cx="708.5" cy="1050.0" r="14.500" fill="#e33b2e"/><path d="M708.5,1050.0 L721.1,1042.8 A14.500,14.500 0 0 1 706.0,1064.3 Z" fill="#fbc116"/><path d="M708.5,1050.0 L706.0,1064.3 A14.500,14.500 0 0 1 695.4,1043.9 Z" fill="#2da94f"/><circle cx="708.5" cy="1050.0" r="6.800" fill="#fff"/><circle cx="708.5" cy="1050.0" r="5.300" fill="#4a8af4"/><rect x="749" y="1035.500" width="30" height="29.500" rx="6" fill="#050505"/><circle cx="763.500" cy="1049.200" r="11.7" fill="none" stroke="#e6e02a" stroke-width="1.5"/><path d="M775.2,1049.200 V1061.800" fill="none" stroke="#e6e02a" stroke-width="1.5"/><circle cx="763.500" cy="1049.200" r="9.6" fill="none" stroke="#2fc36a" stroke-width="1.5"/><path d="M773.1,1049.200 V1061.800" fill="none" stroke="#2fc36a" stroke-width="1.5"/><circle cx="763.500" cy="1049.200" r="7.5" fill="none" stroke="#2f9bf0" stroke-width="1.5"/><path d="M771.0,1049.200 V1061.800" fill="none" stroke="#2f9bf0" stroke-width="1.5"/><circle cx="763.500" cy="1049.200" r="5.2" fill="none" stroke="#e03bb1" stroke-width="2.0"/><path d="M768.7,1049.200 V1061.800" fill="none" stroke="#e03bb1" stroke-width="2.0"/><defs><linearGradient id="plg" x1="0" y1="0" x2="0" y2="1"><stop offset="0" stop-color="#3a93de"/><stop offset="1" stop-color="#1b64b6"/></linearGradient></defs><rect x="806" y="1037.500" width="25.500" height="25" rx="1.500" fill="url(#plg)"/><path d="M813.500,1041.500 v5 M823.500,1041.500 v5" stroke="#d4e8fa" stroke-width="2"/><path d="M811,1046.500 h15.500 v3.500 q0,5 -5.500,6.500 v3.500 h-4.500 v-3.500 q-5.500,-1.500 -5.500,-6.500 z" fill="#d4e8fa"/><path d="M813,1050 h11" stroke="#1e78c8" stroke-width="1"/><defs><linearGradient id="edg" x1="0" y1="0" x2="1" y2="1"><stop offset="0" stop-color="#3aa5ea"/><stop offset="1" stop-color="#1673c8"/></linearGradient><linearGradient id="edg2" x1="0" y1="0" x2="1" y2="0"><stop offset="0" stop-color="#36b98a"/><stop offset="1" stop-color="#7ad86c"/></linearGradient></defs><circle cx="873.6" cy="1050.2" r="14.5" fill="url(#edg)"/><path d="M868,1037 Q877,1034 884.5,1040.500 Q888.5,1045 888,1051.500 Q884,1056 878,1054.500 Q872.500,1052.500 872,1047.500 Q871.500,1042.500 868,1037 Z" fill="url(#edg2)"/><path d="M861,1047.500 Q866,1043 871,1047.500 Q869.500,1055.500 877.500,1058.500 Q883.500,1060 887,1056.500 Q883.500,1064 874,1064.700 Q862,1063 860,1052.500 Z" fill="#0d5aa6"/><path d="M872.200,1051 Q873.500,1047 877.500,1048 Q882.500,1049.300 888.300,1050 L888.100,1053 Q884,1057 878.500,1055.500 Q873.500,1054.300 872.200,1051 Z" fill="#e3e1e0"/><path d="M912.500,1044.500 l3.800,-3.300 l19,14.800 v7.500 z" fill="#1779c4"/><path d="M912.500,1055.500 l3.800,3.300 l19,-14.800 v-7.500 z" fill="#2a94e0"/><path d="M934.500,1036 l8,3.700 v20.600 l-8,3.700 z" fill="#34a4ee"/><path d="M934.500,1036 l-7.500,7 v14 l7.500,7 z" fill="#1a85d2" opacity="0.550"/><rect x="969.500" y="1046.500" width="8" height="17" rx="2.200" fill="#f6c044"/><rect x="980.300" y="1039.500" width="8" height="24" rx="2.200" fill="#1b8de0"/><rect x="991" y="1048.500" width="8" height="15" rx="2.200" fill="#d8262c"/><circle cx="1038.500" cy="1050.500" r="13.500" fill="#2596d8"/><path d="M1030.500,1050.500 l16.500,-6.500 l-2.800,13.500 l-5.200,-3.600 l-2.600,2.800 l-0.400,-4.400 z" fill="#fff"/><circle cx="1050" cy="1040.800" r="8.400" fill="#a0a0a0"/><text x="1050" y="1045" font-size="11.500" text-anchor="middle" style="fill:#fff">60</text><circle cx="1096.5" cy="1042.500" r="5" fill="#7b83eb"/><circle cx="1105.0" cy="1044.500" r="3.500" fill="#5059c9"/><path d="M1099.5,1048.500 h8 q1.500,0 1.500,1.500 v7 q0,4 -4,4 q-4,0 -5.500,-3 z" fill="#5059c9"/><path d="M1090.5,1048.500 h12 q1.500,0 1.500,1.500 v8.500 q0,6 -6.500,6 q-6,0 -7,-5 z" fill="#7b83eb"/><rect x="1079.5" y="1043" width="14.200" height="14.200" rx="1.600" fill="#4b53bc"/><path d="M1082.8,1047 h7.600 M1086.6,1047 v7.300" stroke="#fff" stroke-width="1.900"/><path d="M1146.300,1037.500 Q1148.300,1033.500 1150.300,1037.500 L1157.300,1056.500 H1139.300 Z" fill="#f48b1a"/><path d="M1144.700,1042 h7.200 l1.600,4.300 h-10.400 z" fill="#ececec"/><path d="M1142,1049.500 h12.600 l1.500,4 h-15.600 z" fill="#ececec"/><path d="M1139.300,1056 h18 l4.400,6.500 q-13.400,2.600 -26.800,0 z" fill="#f08a10"/><path d="M1188.7,1044 l4.200,-2.600 v17.200 l-4.200,-2.600 z" fill="#5a3fae"/><path d="M1192.9,1041.400 l4,-1 l14.500,13.600 v10.500 l-2,0.500 z" fill="#7a57c8"/><path d="M1192.9,1058.600 l4,1 l14.500,-13.600 v-10.500 l-2,-0.500 z" fill="#9a74dc"/><path d="M1210.9,1034.800 l7.800,3.600 v23.200 l-7.800,3.600 z" fill="#ba92f6"/><path d="M1210.9,1044 l-7.500,6 l7.500,6 z" fill="#e3e1e0"/><path d="M1266,1037 h6 v6.500 M1245.500,1056.500 v6 h6.500" fill="none" stroke="#2f9e57" stroke-width="2.200"/><path d="M1247.800,1039 a7.400,3 0 0 1 14.800,0 v13.500 a7.400,3 0 0 1 -14.800,0 z" fill="#f7c948"/><ellipse cx="1255.200" cy="1039" rx="7.400" ry="3" fill="#fbe08a"/><path d="M1258,1051 l11.500,11 M1269.500,1051 l-11.500,11" stroke="#a67ee0" stroke-width="2.200"/><path d="M1256.500,1049 l4.500,4.500" stroke="#a67ee0" stroke-width="4"/><path d="M1267.500,1048 l3.500,3.500" stroke="#a67ee0" stroke-width="3.600"/><rect x="1290" y="1025.500" width="47.500" height="48.500" rx="5" fill="#f1efee" stroke="#e6e4e2" stroke-width="1"/><rect x="1298.500" y="1035" width="30.500" height="30" fill="#f08705"/><path d="M1313.500,1046 l14.500,14.500 v4.500 h-12 l-8,-8 z" fill="#df6c0c"/><path d="M1313.800,1044 l-6.300,11 M1313.800,1044 l6.300,11" stroke="#fff" stroke-width="2"/><rect x="1309.300" y="1039.500" width="9" height="7.600" rx="1" fill="#fff"/><rect x="1302.800" y="1052.500" width="9" height="7.600" rx="1" fill="#fff"/><rect x="1315.800" y="1052.500" width="9" height="7.600" rx="1" fill="#fff"/><rect x="1304" y="1070" width="20" height="3.400" rx="1.700" fill="#1a7fd4"/><defs><linearGradient id="pyc" x1="0" y1="1" x2="1" y2="0"><stop offset="0" stop-color="#1597f0"/><stop offset="0.42" stop-color="#21c0ea"/><stop offset="0.72" stop-color="#35d488"/><stop offset="1" stop-color="#f6ea4c"/></linearGradient></defs><path d="M1354,1047.500 L1364,1036 L1383.500,1035.500 L1384,1053 L1373,1064.500 H1357 L1354,1061 Z" fill="url(#pyc)"/><rect x="1359.700" y="1041" width="18.400" height="18" fill="#000"/><text x="1361.600" y="1050.300" font-size="8.800" style="fill:#fff;font-weight:bold">PC</text><rect x="1361.800" y="1055" width="7" height="1.400" fill="#fff"/><rect x="1418.500" y="1037" width="18" height="18" rx="3" fill="none" stroke="#1d8fd8" stroke-width="4.700"/><rect x="1411.500" y="1044.300" width="18" height="18" rx="3" fill="none" stroke="#f08a1c" stroke-width="4.700"/><path d="M1425,1055 h9" stroke="#1d8fd8" stroke-width="4.700"/><circle cx="1480.5" cy="1042.500" r="5" fill="#7b83eb"/><circle cx="1489.0" cy="1044.500" r="3.500" fill="#5059c9"/><path d="M1483.5,1048.500 h8 q1.500,0 1.500,1.500 v7 q0,4 -4,4 q-4,0 -5.500,-3 z" fill="#5059c9"/><path d="M1474.5,1048.500 h12 q1.500,0 1.500,1.500 v8.500 q0,6 -6.500,6 q-6,0 -7,-5 z" fill="#7b83eb"/><rect x="1463.5" y="1043" width="14.200" height="14.200" rx="1.600" fill="#4b53bc"/><path d="M1466.8,1047 h7.600 M1470.6,1047 v7.300" stroke="#fff" stroke-width="1.900"/><circle cx="1490" cy="1039" r="10" fill="#d13438"/><rect x="539.8" y="1070.500" width="7.500" height="3" rx="1.500" fill="#8b8987"/><rect x="594.8" y="1070.500" width="7.500" height="3" rx="1.500" fill="#8b8987"/><rect x="704.8" y="1070.500" width="7.500" height="3" rx="1.500" fill="#8b8987"/><rect x="869.8" y="1070.500" width="7.500" height="3" rx="1.500" fill="#8b8987"/><rect x="1034.8" y="1070.500" width="7.500" height="3" rx="1.500" fill="#8b8987"/><rect x="1474.3" y="1070.500" width="7.500" height="3" rx="1.500" fill="#8b8987"/><path d="M1529.500,1054 l8,-8 l8,8" fill="none" stroke="#1c1c1c" stroke-width="1.600"/><path d="M1566.800,1040 q4.600,2.800 8.800,2.800 v6.400 q0,6.400 -8.800,9.700 q-8.800,-3.300 -8.800,-9.700 v-6.400 q4.200,0 8.800,-2.800z" fill="#1a86d9"/><path d="M1566.800,1040 q4.600,2.800 8.800,2.800 v6.400 q0,6.400 -8.800,9.700 z" fill="#3aa5ec"/><circle cx="1571.600" cy="1054.700" r="5.300" fill="#2b9a47"/><path d="M1569,1054.700 l2,2 l3.300,-3.600" stroke="#fff" stroke-width="1.300" fill="none"/><path d="M1589.500,1055 q-3,-0.500 -2.500,-3.800 q0.500,-2.800 3.800,-2.800 q1.400,-3.800 5.700,-3.300 q3.300,0.500 4.300,3.300 q3.800,0 3.800,3.300 q0,3.300 -3.300,3.300 z" fill="#8b8b8b"/><path d="M1589.500,1055 q-3,-0.500 -2.500,-3.800 q0.500,-2.800 3.800,-2.800 q1.400,-3.800 5.700,-3.300" fill="none" stroke="#4a4a4a" stroke-width="1.200"/><circle cx="1601.400" cy="1054.700" r="5.400" fill="#d43a3a"/><path d="M1599.300,1052.600 l4.200,4.200 m0,-4.200 l-4.200,4.200" stroke="#fff" stroke-width="1.300"/><rect x="1612.300" y="1025" width="39.600" height="49.400" rx="5" fill="#f5f1e9"/><rect x="1628.500" y="1039.500" width="7.500" height="13" rx="3.700" fill="#1b1b1b"/><path d="M1625.300,1049 q0,7 7,7 q7,0 7,-7 M1632.300,1056 v4.500" fill="none" stroke="#1b1b1b" stroke-width="1.400"/><path d="M1622,1039.500 l20,21.500" stroke="#1b1b1b" stroke-width="1.400"/><circle cx="1727.200" cy="1055.500" r="1.500" fill="#1b1b1b"/><path d="M1723.81,1052.11 A4.8,4.8 0 0 1 1730.59,1052.11" fill="none" stroke="#1b1b1b" stroke-width="1.500"/><path d="M1720.98,1049.28 A8.8,8.8 0 0 1 1733.42,1049.28" fill="none" stroke="#1b1b1b" stroke-width="1.500"/><path d="M1718.15,1046.45 A12.8,12.8 0 0 1 1736.25,1046.45" fill="none" stroke="#1b1b1b" stroke-width="1.500"/><path d="M1748,1047 h3.500 l5,-4.500 v14.500 l-5,-4.500 h-3.500 z" fill="none" stroke="#1b1b1b" stroke-width="1.300" stroke-linejoin="round"/><path d="M1759.500,1046.800 l6,6 m0,-6 l-6,6" stroke="#1b1b1b" stroke-width="1.300"/><rect x="1778.500" y="1043.500" width="16" height="11.500" rx="2.300" fill="none" stroke="#1b1b1b" stroke-width="1.400"/><path d="M1796.300,1047 v4.500" stroke="#1b1b1b" stroke-width="2.200" stroke-linecap="round"/><path d="M1781,1052.500 l2.500,-6.500 h5.500 v6.500 z" fill="#1b1b1b"/><path d="M1781.500,1039.500 l-3,6 h3 l-1.500,4.500" fill="none" stroke="#1b1b1b" stroke-width="1.300"/></svg><div style="position:absolute;top:1041.00px;height:19px;line-height:19px;font-size:14.80px;color:#1b1b1b;white-space:pre;letter-spacing:-0.824px;left:1665.50px;">ENG</div><div style="position:absolute;top:1030.10px;height:19px;line-height:19px;font-size:14.80px;color:#1b1b1b;white-space:pre;letter-spacing:-1.167px;right:24.37px;text-align:right;">13:01</div><div style="position:absolute;top:1050.20px;height:19px;line-height:19px;font-size:14.80px;color:#1b1b1b;white-space:pre;letter-spacing:-0.077px;right:23.28px;text-align:right;">10/17/2024</div>
<svg style="left:0;top:0" width="1913" height="1080" viewBox="0 0 1913 1080"><g opacity="0.105"><g fill="none" stroke="#222" stroke-width="10.4" stroke-linecap="round" stroke-linejoin="round"><path d="M880,957.700 V996.400 A17,17 0 1 1 863,979.400"/><path d="M880,1007.700 H1036"/><circle cx="916.900" cy="992.500" r="15.200"/><path d="M957.4,1007.700 L959.0,989.5"/><path d="M979.2,1007.700 L980.8,989.5"/><path d="M996.7,1007.700 L998.3,983.0"/><path d="M1012.6,1007.700 L1014.2,983.0"/><circle cx="1049.400" cy="996.900" r="16.200"/></g><g fill="#222"><circle cx="909.4" cy="959.2" r="6.700"/><circle cx="926.1" cy="959.2" r="6.700"/><circle cx="949.9" cy="971.8" r="6.700"/><circle cx="966.6" cy="971.8" r="6.700"/></g></g><text x="955.600" y="1049.600" font-size="35" text-anchor="middle" textLength="229" lengthAdjust="spacingAndGlyphs" style="fill:#222;font-weight:bold" opacity="0.042">mostaql.com</text></svg>
</body></html>
